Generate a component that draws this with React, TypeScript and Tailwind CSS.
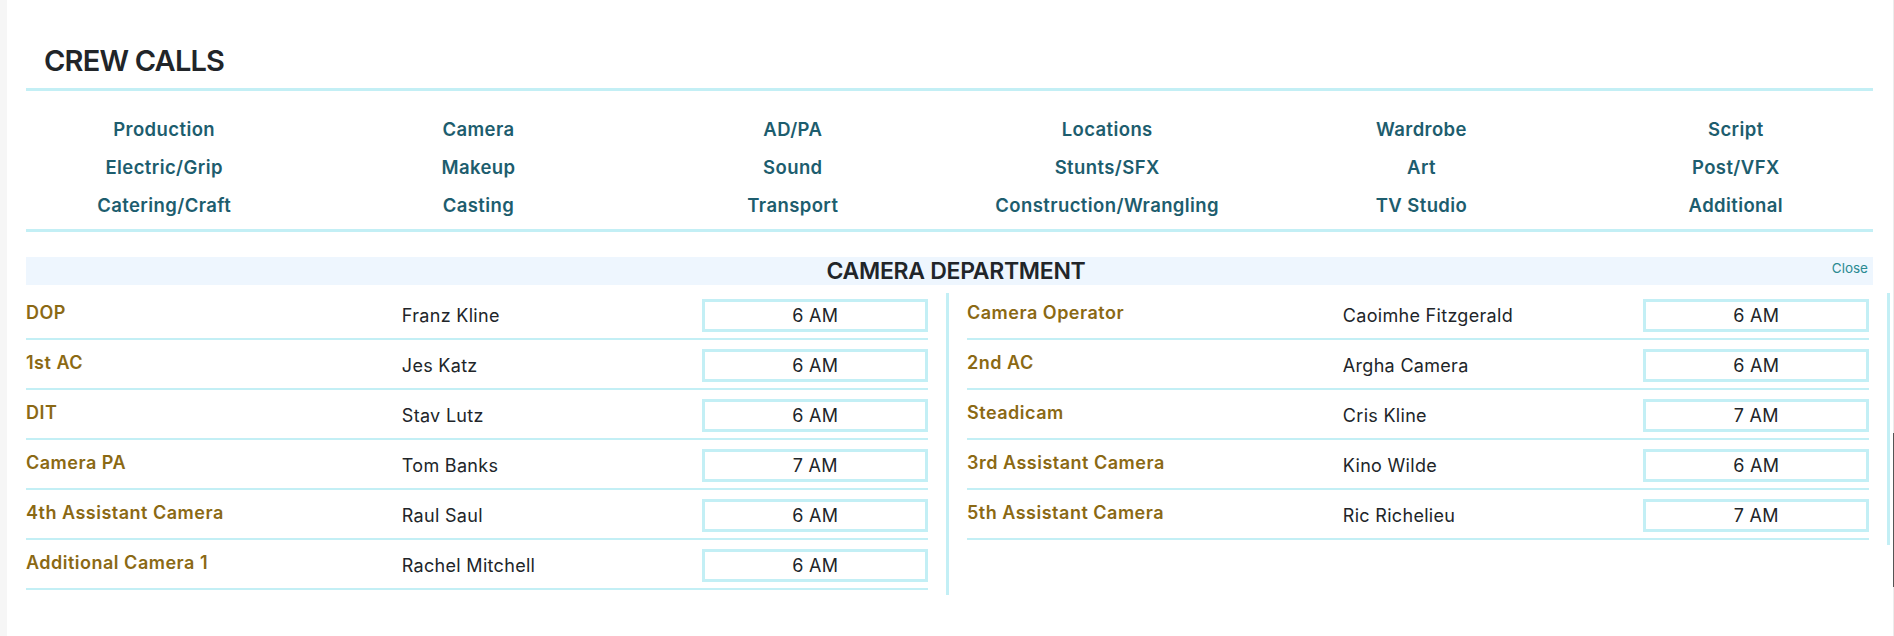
import React from "react";

const departments = [
  "Production",
  "Camera",
  "AD/PA",
  "Locations",
  "Wardrobe",
  "Script",
  "Electric/Grip",
  "Makeup",
  "Sound",
  "Stunts/SFX",
  "Art",
  "Post/VFX",
  "Catering/Craft",
  "Casting",
  "Transport",
  "Construction/Wrangling",
  "TV Studio",
  "Additional",
];

type Call = { role: string; name: string; time: string };

const leftCalls: Call[] = [
  { role: "DOP", name: "Franz Kline", time: "6 AM" },
  { role: "1st AC", name: "Jes Katz", time: "6 AM" },
  { role: "DIT", name: "Stav Lutz", time: "6 AM" },
  { role: "Camera PA", name: "Tom Banks", time: "7 AM" },
  { role: "4th Assistant Camera", name: "Raul Saul", time: "6 AM" },
  { role: "Additional Camera 1", name: "Rachel Mitchell", time: "6 AM" },
];

const rightCalls: Call[] = [
  { role: "Camera Operator", name: "Caoimhe Fitzgerald", time: "6 AM" },
  { role: "2nd AC", name: "Argha Camera", time: "6 AM" },
  { role: "Steadicam", name: "Cris Kline", time: "7 AM" },
  { role: "3rd Assistant Camera", name: "Kino Wilde", time: "6 AM" },
  { role: "5th Assistant Camera", name: "Ric Richelieu", time: "7 AM" },
];

function CallRow({ call, first }: { call: Call; first: boolean }) {
  return (
    <div
      className={`grid grid-cols-[5fr_4fr_3fr] border-b-2 border-[#c3eff5] pb-[6px] ${
        first ? "pt-[6px]" : "pt-[9px]"
      }`}
    >
      <div className="self-start text-[18px] leading-7 font-semibold tracking-[0.5px] text-[#8b6914]">
        {call.role}
      </div>
      <div className="self-center text-[18px] leading-7 tracking-[0.3px] text-[#212529]">
        {call.name}
      </div>
      <div className="h-[33px] border-[3px] border-[#c3eff5] flex items-center justify-center text-[18px] tracking-[0.3px] text-[#212529]">
        {call.time}
      </div>
    </div>
  );
}

function CallColumn({ calls }: { calls: Call[] }) {
  return (
    <div className="w-[923px] shrink-0 border-r-[3px] border-[#c3eff5] pr-[18px] pb-[5px] self-start">
      {calls.map((c, i) => (
        <CallRow key={c.role} call={c} first={i === 0} />
      ))}
    </div>
  );
}

export default function App() {
  return (
    <div
      className="flex h-[636px] bg-white overflow-hidden"
      style={{ fontFamily: "Inter, 'Noto Sans', sans-serif" }}
    >
      {/* left gutter */}
      <div className="w-[7px] shrink-0 bg-[#f6f6f6]" />

      <div className="flex-1 min-w-0">
        {/* heading */}
        <div className="ml-[19px] mr-[20px] pt-[43px] pb-[9px] pl-[18px] border-b-[3px] border-[#c3eff5]">
          <h1 className="text-[29px] leading-[36px] font-semibold tracking-[-0.8px] text-[#212529]">
            CREW CALLS
          </h1>
        </div>

        {/* department links */}
        <div className="grid grid-cols-6 mt-[19px] mb-[5px]">
          {departments.map((d) => (
            <a
              key={d}
              className="text-center text-[18.5px] leading-[38px] font-semibold tracking-[0.4px] text-[#1d5d6e] cursor-pointer"
            >
              {d}
            </a>
          ))}
        </div>
        <div className="ml-[19px] mr-[20px] border-b-[3px] border-[#c3eff5]" />

        {/* camera department */}
        <div className="ml-[19px] mr-[20px] mt-[25px]">
          <div className="relative h-[28px] bg-[#eef6fe] flex items-center justify-center pl-[13px]">
            <h2 className="text-[23px] leading-[28px] font-semibold tracking-[-0.3px] text-[#212529]">
              CAMERA DEPARTMENT
            </h2>
            <button className="absolute right-[5px] top-[3px] text-[13.5px] leading-[16px] text-[#2a8a92]">
              Close
            </button>
          </div>

          <div className="flex gap-[18px] mt-[8px]">
            <CallColumn calls={leftCalls} />
            <CallColumn calls={rightCalls} />
          </div>
        </div>
      </div>

      {/* right edge / scrollbar */}
      <div className="w-[1px] shrink-0 bg-[#ececec] flex flex-col">
        <div className="mt-[433px] h-[154px] bg-[#555555]" />
      </div>
    </div>
  );
}
